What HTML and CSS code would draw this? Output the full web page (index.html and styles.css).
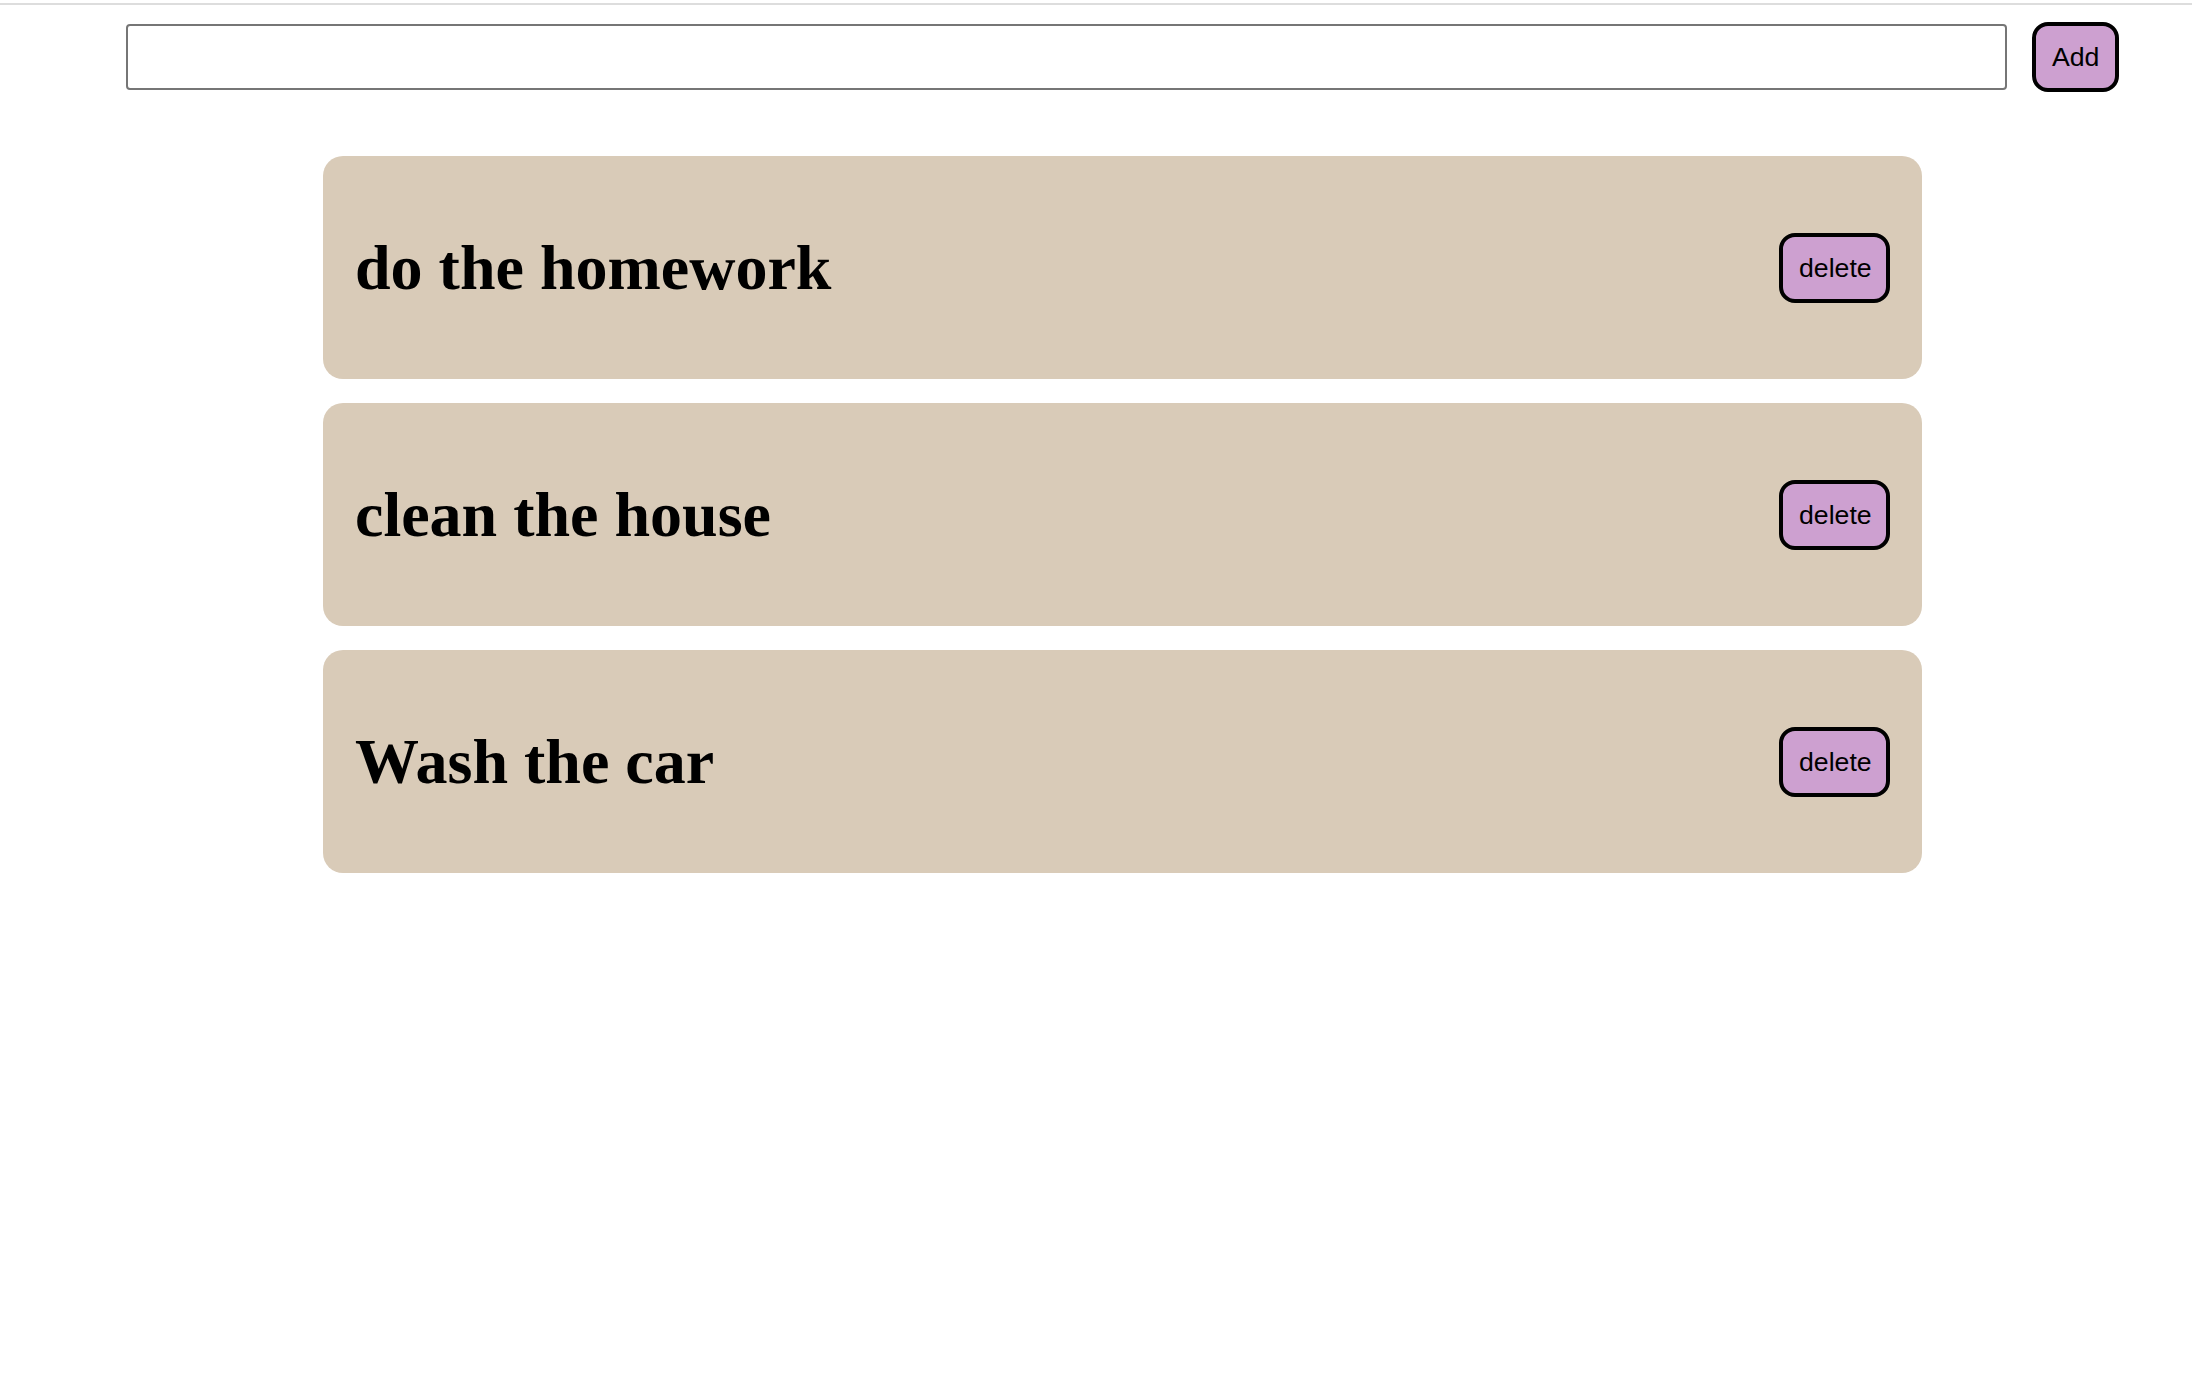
FILE: index.html
```html
<!DOCTYPE html>
<html>
<head>
<meta charset="utf-8">
<title>Todo</title>
<link rel="stylesheet" href="styles.css">
</head>
<body>
<div class="topline"></div>
<form class="add-form">
  <input class="task-input" type="text">
  <button class="btn add-btn" type="button">Add</button>
</form>
<div class="list">
  <div class="card">
    <h1 class="title">do the homework</h1>
    <button class="btn del-btn" type="button">delete</button>
  </div>
  <div class="card">
    <h1 class="title">clean the house</h1>
    <button class="btn del-btn" type="button">delete</button>
  </div>
  <div class="card">
    <h1 class="title">Wash the car</h1>
    <button class="btn del-btn" type="button">delete</button>
  </div>
</div>
</body>
</html>
```
FILE: styles.css
```css
html, body {
  margin: 0;
  padding: 0;
  background: #ffffff;
}
body {
  font-family: "Liberation Serif", "Times New Roman", serif;
  min-height: 1393px;
}
.topline {
  margin-top: 3px;
  height: 2px;
  background: #dddddd;
}
.add-form {
  display: flex;
  align-items: center;
  gap: 25px;
  margin: 17px 0 0 126px;
}
.task-input {
  box-sizing: border-box;
  width: 1881px;
  height: 66px;
  margin: 0;
  border: 2px solid #767676;
  border-radius: 4px;
  background: #fff;
  font-family: "Liberation Sans", Arial, sans-serif;
  font-size: 26.67px;
  padding: 2px 4px;
}
.btn {
  box-sizing: border-box;
  height: 70px;
  margin: 0;
  padding: 0 16px;
  border: 4px solid #000;
  border-radius: 16px;
  background: #cda0d0;
  color: #000;
  font-family: "Liberation Sans", Arial, sans-serif;
  font-size: 26.67px;
  line-height: 30px;
}
.add-btn {
  width: 87px;
}
.del-btn {
  width: 111px;
  flex: none;
}
.list {
  display: flex;
  flex-direction: column;
  gap: 24px;
  margin: 64px 0 0 323px;
  width: 1599px;
}
.card {
  box-sizing: border-box;
  height: 223px;
  display: flex;
  align-items: center;
  justify-content: space-between;
  padding: 0 32px;
  background: #d9cbb8;
  border-radius: 20px;
}
.title {
  margin: 0;
  font-size: 64px;
  font-weight: bold;
  line-height: 74px;
  color: #000;
}
```
